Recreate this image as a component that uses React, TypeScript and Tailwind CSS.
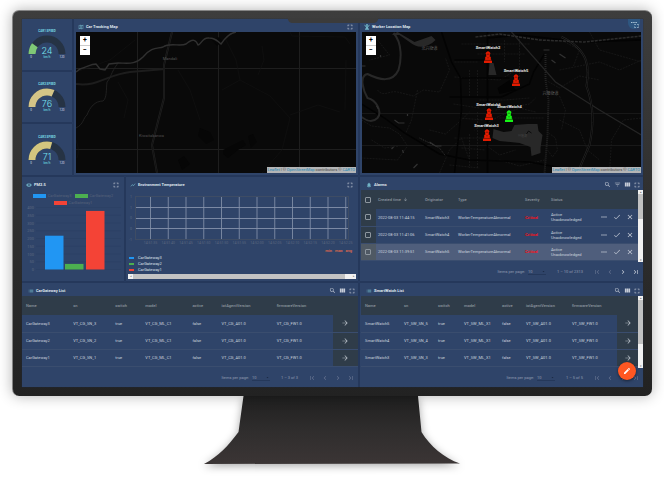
import type { ReactNode } from "react";
import {
  MdArrowDownward,
  MdArrowDropDown,
  MdArrowForward,
  MdChevronLeft,
  MdChevronRight,
  MdClose,
  MdDone,
  MdEdit,
  MdFilterList,
  MdFirstPage,
  MdFullscreen,
  MdLastPage,
  MdList,
  MdMoreHoriz,
  MdNotifications,
  MdOutlineMap,
  MdSearch,
  MdShowChart,
  MdViewColumn,
  MdVisibility,
} from "react-icons/md";

function IconButton({ label, children, dim }: { label: string; children: ReactNode; dim?: boolean }) {
  return (
    <button
      type="button"
      aria-label={label}
      className={`flex size-2 shrink-0 items-center justify-center ${dim ? "text-[#64728f]" : "text-[#c6ccd8]"}`}
    >
      {children}
    </button>
  );
}

const fullscreen = (
  <IconButton label="Fullscreen">
    <MdFullscreen className="size-2" />
  </IconButton>
);

function Panel({
  icon,
  title,
  tools,
  pad,
  children,
}: {
  icon: ReactNode;
  title: string;
  tools?: ReactNode;
  pad: string;
  children: ReactNode;
}) {
  return (
    <section className="flex min-w-0 flex-col bg-[#2f4469] shadow-[0_0_1px_#1c2b49]">
      <header className={`flex h-[13px] shrink-0 items-center pt-0.5 ${pad}`}>
        <span className="text-[#71b3c6]">{icon}</span>
        <h2 className="ml-0.5 flex-1 text-[4px] font-bold text-[#dfe4ec]">{title}</h2>
        <div className="flex gap-0.5">{tools}</div>
      </header>
      {children}
    </section>
  );
}

function Gauge({ title, value, color }: { title: string; value: number; color: string }) {
  return (
    <section className="flex flex-1 items-center justify-center bg-[#2f4469] shadow-[0_0_1px_#1c2b49]">
      <svg viewBox="0 0 50 50" className="h-[50px] w-[50px]" role="img" aria-label={title}>
        <text x="25" y="13" fontSize="3" fontWeight="700" textAnchor="middle" fill="#79dbe6">{title}</text>
        <path d="M10 35a15 15 0 0 1 30 0" fill="none" stroke="#263344" strokeWidth="7" />
        <path
          d="M10 35a15 15 0 0 1 30 0"
          fill="none"
          stroke={color}
          strokeWidth="7"
          pathLength={120}
          strokeDasharray={`${value} 240`}
        />
        <text x="25" y="35" fontSize="9" fontFamily="Inter" fontWeight="300" textAnchor="middle" fill="#78e3ef">{value}</text>
        <text x="25" y="39" fontSize="3" fontWeight="700" textAnchor="middle" fill="#5cbccb">km/h</text>
        <text x="9" y="39" fontSize="3" textAnchor="middle" fill="#d9dfe8">0</text>
        <text x="40" y="39" fontSize="3" textAnchor="middle" fill="#d9dfe8">120</text>
      </svg>
    </section>
  );
}

function MapFrame({ children }: { children: ReactNode }) {
  return (
    <div className="relative mx-0.5 mb-0.5 h-[141px] overflow-hidden bg-[#090909]">
      {children}
      <div className="absolute top-1 left-1 flex w-2.5 flex-col bg-white font-bold text-black">
        <button type="button" aria-label="Zoom in" className="h-2.5 border-b border-[#ccc] text-[7px] leading-[9px]">+</button>
        <button type="button" aria-label="Zoom out" className="h-[9px] text-[7px] leading-[9px]">−</button>
      </div>
      <p className="absolute right-0 bottom-0 bg-[#b4b5b6] px-px text-[4px] leading-[6px] text-[#444]">
        <a href="#leaflet" className="text-[#2487b5]">Leaflet</a> | ©{" "}
        <a href="#osm" className="text-[#2487b5]">OpenStreetMap</a> contributors ©{" "}
        <a href="#carto" className="text-[#2487b5]">CARTO</a>
      </p>
    </div>
  );
}

function CarMap() {
  return (
    <MapFrame>
      <svg viewBox="76 32 280 141" preserveAspectRatio="xMidYMid slice" className="size-full" fill="none">
        <g stroke="#1e1e1e" strokeWidth="1">
          <path d="M137.5 32v141M218.500 32v141M299.500 32v141M76 68.500h280M76 149.500h280" />
        </g>
        <g stroke="#131313" strokeWidth=".6">
          <path d="M76 72L110 60L135 40M118 82L128 100L124 118M225 38L236 60L240 80L270 96L290 118L282 150L262 173M240 80L222 90M290 115L318 105L340 112M262 46L264 60L258 75M346 60L345 110M290 32L292 36L345 37L350 44M178 70L190 90L200 120M76 140Q80 150 77 158" />
        </g>
        <g fill="#060606">
          <path d="M200 128l10 4 4 8-8 4-8-8zM223 150l16-8 4-2 3 5-8 5-10 8-5-4zM248 136l5-2 4 8-6 6zM178 160l6-4 6 8-8 6zM212 40l6-3 5 4-6 5z" />
        </g>
        <path d="M76 84C98 87 106 75 130 72L165 69" stroke="#1d1d1d" strokeWidth="2" />
        <path d="M118 63C110 74 112 76 107 82C106 90 107 98 103 101C95 101 90 107 87 115C83 118 84 124 76 128" stroke="#202020" />
        <path d="M172 32L170 40L164 65L164 98L152 145L157 173" stroke="#232323" strokeWidth="2" />
        <path d="M172 32L170 40L164 65L164 98L152 145L157 173" stroke="#0b0b0b" strokeWidth=".7" />
        <path
          d="M76 72L80 69C87 67 91 64 96 64L100 69L105 70L109 64L118 63C128 63 135 65 143 57C152 46 158 49 163 47C170 42 180 47 186 44C193 38 196 40 198 45C202 44 202 37 209 38C215 38 218 41 221 44C225 38 229 33 236 32"
          stroke="#303030"
          strokeWidth="1.400"
        />
        <text x="170" y="59.500" fontSize="4" textAnchor="middle" fill="#565656">Mandali</text>
        <text x="151.500" y="136.500" fontSize="4" textAnchor="middle" fill="#505050">Kiwaitabanwa</text>
      </svg>
    </MapFrame>
  );
}

const workers = [
  { name: "SmartWatch2", x: 488.5, y: 45, color: "#e31b00" },
  { name: "SmartWatch5", x: 516.5, y: 68, color: "#e31b00" },
  { name: "SmartWatch6", x: 489, y: 102, color: "#e31b00" },
  { name: "SmartWatch4", x: 510, y: 104, color: "#16f516" },
  { name: "SmartWatch3", x: 487, y: 123, color: "#e31b00" },
];

function WorkerMap() {
  return (
    <MapFrame>
      <svg viewBox="362 32 280 141" preserveAspectRatio="xMidYMid slice" className="size-full" fill="none">
        <path d="M362 145.500h280M362 113.500h280" stroke="#181818" />
        <g stroke="#1c1c1c" strokeWidth=".7" strokeDasharray="2 1">
          <path d="M378 90C384 98 390 90 398 92L414 96L424 90L440 92L450 70L446 58M362 120L372 126L390 128L400 134L408 146L398 160L362 158M418 90L412 120L406 134M430 130L446 134L462 120L470 112M440 173L450 150L462 138L470 160M455 62L478 62M455 77L500 80L520 68M470 70V97M478 70V96M536 112L520 108L500 116L475 130M549 133L556 138L558 150L553 157L548 150M560 120L580 130L588 150L600 160M560 70L600 62L620 70L642 60M590 32L600 50L642 62M610 173L612 140L624 120L642 118M500 160L520 166L545 160M486 145L500 155L516 150" />
          <path d="M480 100H505L530 98M462 44H530M478 54H525M505 40V62M520 36V80M546 80L560 88L580 76L600 80M562 40L580 50L574 66M378 40L390 55L370 60M372 140L385 148L400 146M454 104L480 108M460 118L484 120M455 138H484M462 148L486 150M496 110L530 104L536 98M500 118H545M560 96L566 110L562 130M450 165L480 168M470 134V168M478 112V168" />
        </g>
        <g stroke="#030303" strokeWidth="1.500">
          <path d="M488 32V173M442 32L452 62L461 78L462 110L455 173M450 97L502 97L530 84L534 72L545 54M455 60H488M462 78H510M488 38L520 35L582 42L642 40M362 104L385 118L405 133L440 154L470 160L530 162L590 173" />
        </g>
        <path d="M512 32L556 82L600 110L642 135" stroke="#252525" strokeWidth="1.200" />
        <path d="M562 37C590 50 590 68 587 86C596 110 593 130 590 145L578 173" stroke="#272727" strokeWidth="2" />
        <path d="M562 37C590 50 590 68 587 86C596 110 593 130 590 145L578 173" stroke="#090909" strokeWidth="1" />
        <path d="M546 54V80L549 100L548 135L545 173" stroke="#242424" strokeWidth="2" strokeDasharray="1 1" />
        <path d="M476 37L500 34L540 40L585 42L642 36" stroke="#2c2c2c" strokeWidth="1.500" strokeDasharray="3 1" />
        <path d="M498 88l12-8 6 10-16 4z" fill="#030303" />
        <path d="M490 63h4l3 12h-8zM494 129L504 132L512 131L515 125L528 124L538 124L539 131L543 135L541 148L541 153L532 156L531 147L520 143L500 141L493 138Z" fill="#282828" />
        <path d="M527 134l2-3 3 2" stroke="#0b0b0b" />
        <path
          d="M394 33C403 43 402 60 399 70C393 83 380 80 368 74C359 76 364 91 368 98C377 100 383 112 378 118C372 124 366 120 362 117"
          stroke="#282828"
          strokeWidth="2"
        />
        <path d="M392 35L398 32L415 42L432 36L436 40C428 48 418 49 410 42L400 35Z" fill="#282828" />
        <g stroke="#323232" strokeWidth="1.200">
          <path d="M395 120l4 3 6 0M414 168l4-4M377 106l2 3M392 149l2-2M403 150l1 3M544 50l6 0M560 54l6 4M552 60l4 3M430 142l6 4 6 0M408 114v2M362 66h4M381 55v2" />
        </g>
        <path d="M420 138L440 148L446 156" stroke="#333" strokeDasharray="1 1" />
        <g fontSize="4" fill="#5d5d5d" textAnchor="middle" fontFamily="Noto Sans CJK SC">
          <text x="430" y="49.500">北兴街道</text>
          <text x="551" y="95">兴隆街道</text>
          <text x="523" y="137" fontSize="3" fill="#444">兴隆湖</text>
        </g>
      </svg>
      {workers.map((w) => (
        <div
          key={w.name}
          className="absolute flex w-8 -translate-x-1/2 flex-col items-center"
          style={{ left: `${((w.x - 362) / 280) * 100}%`, top: `${((w.y - 32) / 141) * 100}%` }}
        >
          <span className="text-[4px] font-bold leading-[5px] text-[#e4e4e4]">{w.name}</span>
          <svg viewBox="0 0 8 12" className="mt-px h-3 w-2" fill={w.color}>
            <path d="M2.500 1Q4-.5 5.500 1L6.300 2V3H5.900V4.500L5.500 5.200L6.800 6V8.500H7.200V9.800H8V12H0V9.800H.8V8.500H1.200V6L2.500 5.200L2.100 4.500V3H1.700V2Z" />
            <path d="M1 9.400h6M3.300 6.800h1.400M2.800 3.200h2.400" stroke="#2a0a06" strokeWidth=".5" />
          </svg>
        </div>
      ))}
    </MapFrame>
  );
}

const pmBars = [
  { name: "CarGateway3", value: 218, color: "#2196f3", x: 23 },
  { name: "CarGateway2", value: 36, color: "#4caf50", x: 43 },
  { name: "CarGateway1", value: 378, color: "#f44336", x: 64 },
];

function PmChart() {
  const ticks = [400, 350, 300, 250, 200, 150, 100, 50, 0];
  return (
    <div className="flex flex-1 flex-col">
      <ul className="flex flex-wrap justify-center gap-x-[3px] gap-y-0.5 px-2 pt-[3px] text-[4px] leading-[5px] text-[#57627a]">
        {pmBars.map((b) => (
          <li key={b.name} className="flex items-center gap-0.5">
            <span className="h-1 w-[13px]" style={{ backgroundColor: b.color }} />
            {b.name}
          </li>
        ))}
      </ul>
      <svg viewBox="0 0 102 69" className="w-full" role="img" aria-label="PM2.5 by gateway">
        {ticks.map((t, i) => (
          <g key={t}>
            <text x="12" y={4 + i * 7.75} fontSize="4" textAnchor="end" fill="#5c6880">{t}</text>
            <path d={`M14 ${2.5 + i * 7.75}H99`} stroke="#2b3f62" strokeWidth=".5" />
          </g>
        ))}
        {pmBars.map((b) => (
          <rect key={b.name} x={b.x} y={64.5 - b.value * 0.155} width="18.500" height={b.value * 0.155} fill={b.color} />
        ))}
      </svg>
    </div>
  );
}

function TemperatureChart() {
  const times = [
    "14:51:35", "14:51:40", "14:51:45", "14:51:50", "14:51:50", "14:51:55",
    "14:52:00", "14:52:05", "14:52:10", "14:52:15", "14:52:20", "14:52:25",
  ];
  return (
    <div className="flex flex-1 flex-col">
      <svg viewBox="0 0 232 56" className="w-full" role="img" aria-label="Environment temperature over time">
        <rect x="9.500" y="6.500" width="213" height="43" fill="none" stroke="#3e4c64" />
        {times.map((t, i) => (
          <g key={i}>
            <path d={`M${24.5 + i * 17.75} 7V49`} stroke="#8995ad" strokeWidth=".8" />
            <text x={24.5 + i * 17.75} y="54" fontSize="3.500" textAnchor="middle" fill="#5c6880">{t}</text>
          </g>
        ))}
        <path d="M10 17.500H222M10 28.500H222M10 38.500H222" stroke="#8491aa" strokeWidth=".9" />
        {["1", "1", "0", "0", "-1"].map((t, i) => (
          <text key={i} x="6" y={8 + i * 10.7} fontSize="3.500" textAnchor="end" fill="#5c6880">{t}</text>
        ))}
      </svg>
      <div className="flex justify-end gap-[3px] pt-[3px] pr-1.5 text-[4px] font-bold leading-[4px] text-[#d5664f]">
        <span>min</span>
        <span>max</span>
        <span>avg</span>
      </div>
      <ul className="flex flex-col gap-px pl-[3px] pt-0.5 text-[4px] leading-[5px] text-[#dfe4ec]">
        {pmBars.map((b) => (
          <li key={b.name} className="flex items-center gap-1">
            <span className="h-0.5 w-[5px]" style={{ backgroundColor: b.color }} />
            {b.name}
          </li>
        ))}
      </ul>
      <div className="mx-0.5 mt-0.5 flex h-[5px] justify-between bg-[#c3c3c3] text-[3px] leading-[5px] text-[#777]">
        <span className="w-[5px] bg-[#f1f1f1] text-center">◂</span>
        <span className="w-[11px] bg-[#f1f1f1] pr-px text-right">▸</span>
      </div>
    </div>
  );
}

function Scrollbar({ thumb }: { thumb: string }) {
  return (
    <div className="flex w-[5px] shrink-0 flex-col justify-between bg-[#f1f1f1] text-center text-[3px] leading-[4px] text-[#666]">
      <div className="flex flex-col">
        <span>▴</span>
        <span className={`bg-[#c1c1c1] ${thumb}`} />
      </div>
      <span>▾</span>
    </div>
  );
}

function Paginator({ id, range, hasNext }: { id: string; range: string; hasNext?: boolean }) {
  return (
    <footer className="flex min-h-[19px] flex-1 items-center justify-end pr-px text-[4px] text-[#8f9bb1]">
      <label htmlFor={id}>Items per page:</label>
      <span className="relative ml-[3px] w-[18px]">
        <select id={id} className="block h-[7px] w-full appearance-none border-b border-[#25385a] bg-transparent pt-px text-[4px] leading-[5px]">
          <option>10</option>
        </select>
        <MdArrowDropDown className="pointer-events-none absolute top-px right-0 size-[5px] text-[#1c2a44]" />
      </span>
      <span className="mr-[10px] ml-[11px]">{range}</span>
      <div className="flex gap-[5px] pr-0.5">
        <IconButton label="First page" dim><MdFirstPage className="size-2" /></IconButton>
        <IconButton label="Previous page" dim><MdChevronLeft className="size-2" /></IconButton>
        <IconButton label="Next page" dim={!hasNext}><MdChevronRight className="size-2" /></IconButton>
        <IconButton label="Last page" dim={!hasNext}><MdLastPage className="size-2" /></IconButton>
      </div>
    </footer>
  );
}

const entityColumns = ["Name", "sn", "switch", "model", "active", "iotAgentVersion", "firmwareVersion"];

function EntityTable({ rows, widths }: { rows: string[][]; widths: string[] }) {
  return (
    <table className="w-full table-fixed border-collapse text-left text-[4px] leading-[5px]">
      <colgroup>
        {widths.map((w, i) => (
          <col key={i} className={w} />
        ))}
      </colgroup>
      <thead>
        <tr className="h-[19px] bg-[#2f3c49] text-[#8c959f]">
          {entityColumns.map((c) => (
            <th key={c} className="pl-1 font-medium whitespace-nowrap">{c}</th>
          ))}
          <th aria-label="Actions" />
        </tr>
      </thead>
      <tbody>
        {rows.map((r) => (
          <tr key={r[0]} className="h-[17px] border-b border-[#3a4d6e] text-[#cdd4df]">
            {r.map((v, i) => (
              <td key={i} className="pl-1 whitespace-nowrap">{v}</td>
            ))}
            <td className="bg-[#2f3c49]">
              <button type="button" aria-label={`Open ${r[0]}`} className="mx-auto flex text-[#b4bbc4]">
                <MdArrowForward className="size-2" />
              </button>
            </td>
          </tr>
        ))}
      </tbody>
    </table>
  );
}

const listTools = (
  <>
    <IconButton label="Search"><MdSearch className="size-[7px]" /></IconButton>
    <IconButton label="Columns"><MdViewColumn className="size-[7px]" /></IconButton>
    {fullscreen}
  </>
);

const gatewayRows = ["3", "2", "1"].map((n) => [
  `CarGateway${n}`, `VT_CG_SN_${n}`, "true", "VT_CG_ML_C1", "false", "VT_CG_A01.0", "VT_CG_FW1.0",
]);
const gatewayWidths = ["w-[47px]", "w-[42px]", "w-[30px]", "w-[47px]", "w-[29px]", "w-[55px]", "w-[60px]", "w-[25px]"];

const watchRows = ["5", "4", "3"].map((n) => [
  `SmartWatch${n}`, `VT_SW_SN_${n}`, "true", "VT_SW_ML_X1", "false", "VT_SW_A01.0", "VT_SW_FW1.0",
]);
const watchWidths = ["w-[39px]", "w-[34px]", "w-[26px]", "w-[38px]", "w-[24px]", "w-[46px]", "w-[49px]", "w-[21px]"];

const alarms = [
  { time: "2022-08-03 11:44:15", who: "SmartWatch3" },
  { time: "2022-08-03 11:41:06", who: "SmartWatch4" },
  { time: "2022-08-03 11:39:51", who: "SmartWatch5" },
];

function Tick({ label }: { label: string }) {
  return (
    <input
      type="checkbox"
      aria-label={label}
      className="mx-auto block size-[6px] appearance-none rounded-[1px] border border-[#8d969f]"
    />
  );
}

function AlarmTable() {
  return (
    <table className="w-full table-fixed border-collapse text-left text-[4px] leading-[5px]">
      <colgroup>
        <col className="w-[15px]" />
        <col className="w-[47px]" />
        <col className="w-[33px]" />
        <col className="w-[67px]" />
        <col className="w-[26px]" />
        <col className="w-[46px]" />
        <col className="w-[43px]" />
      </colgroup>
      <thead>
        <tr className="h-[19px] bg-[#2f3c49] text-[#8c959f]">
          <th className="pr-0.5"><Tick label="Select all alarms" /></th>
          <th className="pl-0.5 font-medium">
            <span className="flex items-center gap-0.5 whitespace-nowrap">
              Created time <MdArrowDownward className="size-[5px]" />
            </span>
          </th>
          <th className="pl-0.5 font-medium">Originator</th>
          <th className="pl-0.5 font-medium">Type</th>
          <th className="pl-0.5 font-medium">Severity</th>
          <th className="pl-0.5 font-medium">Status</th>
          <th aria-label="Actions" />
        </tr>
      </thead>
      <tbody>
        {alarms.map((a, i) => (
          <tr
            key={a.time}
            className={`h-[17px] border-b border-[#3a4d6e] text-[#cdd4df] ${i === 2 ? "bg-[#4f5e7c]" : ""}`}
          >
            <td className={`pr-0.5 ${i === 2 ? "bg-[#4f5964]" : "bg-[#2f3c49]"}`}>
              <Tick label={`Select alarm ${a.time}`} />
            </td>
            <td className="pl-0.5 whitespace-nowrap">{a.time}</td>
            <td className="pl-0.5">{a.who}</td>
            <td className="pl-0.5">WorkerTemperatureAbnormal</td>
            <td className="pl-0.5 font-bold text-[#f01018]">Critical</td>
            <td className="pl-0.5">
              Active
              <br />
              Unacknowledged
            </td>
            <td>
              <div className="flex items-center justify-center gap-[5px]">
                <IconButton label="Details"><MdMoreHoriz className="size-2" /></IconButton>
                <IconButton label="Acknowledge"><MdDone className="size-2" /></IconButton>
                <IconButton label="Clear"><MdClose className="size-2" /></IconButton>
              </div>
            </td>
          </tr>
        ))}
      </tbody>
    </table>
  );
}

export default function App() {
  return (
    <div className="w-full overflow-hidden bg-white px-3 pt-2.5 font-['Roboto',sans-serif] leading-[5px]">
      <main className="relative z-10 rounded-[7px] border-t border-l border-[#858585] bg-linear-to-b from-[#3d3d3d] to-[#222222] px-[9px] pt-2 pb-[9px] shadow-[0_0_14px_rgba(0,0,0,0.3)]">
        <svg viewBox="0 0 91 5" className="absolute top-[7px] left-1/2 z-10 h-[5px] w-[91px] -translate-x-1/2" fill="#3b3b3b">
          <path d="M0 0H91Q90 5 86 5H5Q1 5 0 0Z" />
        </svg>
        <div className="relative grid grid-cols-[336fr_283fr] gap-0.5 bg-[#283b60]">
          <div className="grid grid-cols-[50fr_284fr] gap-0.5">
            <div className="flex flex-col gap-0.5">
              <Gauge title="CAR1 SPEED" value={24} color="#7fc876" />
              <Gauge title="CAR2 SPEED" value={76} color="#d3c487" />
              <Gauge title="CAR3 SPEED" value={71} color="#d3c67f" />
            </div>
            <Panel pad="px-1" icon={<MdOutlineMap className="size-[6px]" />} title="Car Tracking Map" tools={fullscreen}>
              <CarMap />
            </Panel>
          </div>
          <Panel
            pad="px-1"
            title="Worker Location Map"
            icon={
              <svg viewBox="0 0 6 6" className="size-[6px]" fill="currentColor">
                <circle cx="3" cy="1" r="1" />
                <path d="M.5 .5L2.300 2.300H3.700L5.500 .5V1.500L4 3.300V4.500H5V5.700H1V4.500H2V3.300L.5 1.500Z" />
              </svg>
            }
          >
            <WorkerMap />
          </Panel>
          <div className="grid grid-cols-[102fr_232fr] gap-0.5">
            <Panel pad="px-1" icon={<MdVisibility className="size-[6px]" />} title="PM2.5" tools={fullscreen}>
              <PmChart />
            </Panel>
            <Panel pad="px-1" icon={<MdShowChart className="size-[6px]" />} title="Environment Temperature" tools={fullscreen}>
              <TemperatureChart />
            </Panel>
          </div>
          <Panel
            pad="pl-1.5 pr-0.5"
            icon={<MdNotifications className="size-[6px]" />}
            title="Alarms"
            tools={
              <>
                <IconButton label="Search"><MdSearch className="size-[7px]" /></IconButton>
                <IconButton label="Filter"><MdFilterList className="size-[7px]" /></IconButton>
                <IconButton label="Columns"><MdViewColumn className="size-[7px]" /></IconButton>
                {fullscreen}
              </>
            }
          >
            <div className="flex h-[72px] pl-px">
              <div className="min-w-0 flex-1 overflow-hidden">
                <AlarmTable />
              </div>
              <Scrollbar thumb="h-[25px]" />
            </div>
            <Paginator id="alarm-size" range="1 – 10 of 2313" hasNext />
          </Panel>
          <Panel pad="pl-1.5 pr-0.5" icon={<MdList className="size-[6px]" />} title="CarGateway List" tools={listTools}>
            <div className="h-[72px] overflow-hidden">
              <EntityTable rows={gatewayRows} widths={gatewayWidths} />
            </div>
            <Paginator id="gateway-size" range="1 – 3 of 3" />
          </Panel>
          <Panel pad="pl-1.5 pr-0.5" icon={<MdList className="size-[6px]" />} title="SmartWatch List" tools={listTools}>
            <div className="flex h-[72px] pl-px">
              <div className="min-w-0 flex-1 overflow-hidden">
                <EntityTable rows={watchRows} widths={watchWidths} />
              </div>
              <Scrollbar thumb="h-[44px]" />
            </div>
            <Paginator id="watch-size" range="1 – 5 of 5" />
          </Panel>
          <button
            type="button"
            aria-label="Fullscreen map"
            className="absolute top-0 right-[3px] flex h-2.5 w-3 items-center justify-center rounded-b-full bg-[#2e5680] text-[#a9c3d6]"
          >
            <svg viewBox="0 0 9 7" className="h-[7px] w-[9px]" fill="none" stroke="currentColor">
              <path d="M1 1.500h6" strokeDasharray="1.500 .7" />
              <path d="M4.500 4V3.500H6M7 3.500H8.500V4.500M8.500 5.500V6.500H7M6 6.500H4.500V5.500" strokeWidth=".7" />
            </svg>
          </button>
          <button
            type="button"
            aria-label="Edit dashboard"
            className="absolute right-[7px] bottom-[7px] flex size-[18px] items-center justify-center rounded-full bg-[#ff5722] text-white shadow-[0_1px_3px_rgba(0,0,0,0.5)]"
          >
            <MdEdit className="size-2" />
          </button>
        </div>
      </main>
      <svg viewBox="0 0 260 82" className="mx-auto block w-[260px] drop-shadow-[0_2px_4px_rgba(0,0,0,0.35)]">
        <defs>
          <linearGradient id="stand" x1="0" y1="0" x2="0" y2="1">
            <stop offset="0" stopColor="#1f1f1f" />
            <stop offset=".5" stopColor="#2f2d2d" />
            <stop offset="1" stopColor="#3b3535" />
          </linearGradient>
        </defs>
        <path d="M41.500 0L36.500 36C26 50 17 60 2 68L258 67.500C242 62 228 50 219.500 36L216 0Z" fill="url(#stand)" />
      </svg>
    </div>
  );
}
